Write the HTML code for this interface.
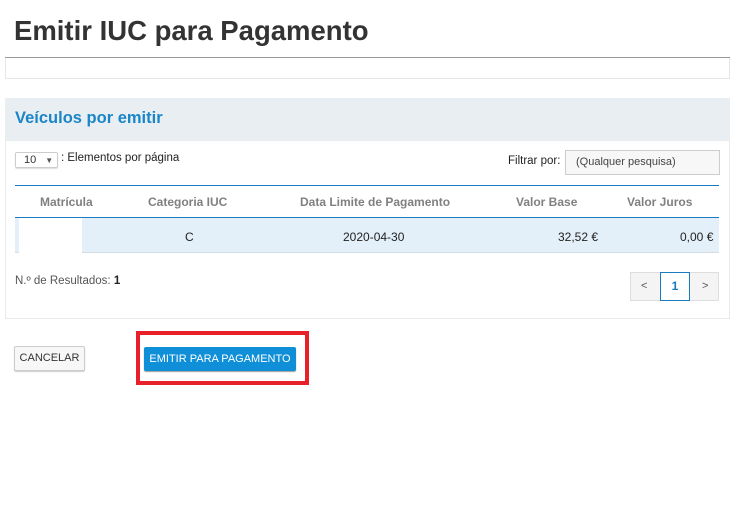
<!DOCTYPE html>
<html><head><meta charset="utf-8"><style>
*{box-sizing:border-box;margin:0;padding:0}
body{width:752px;height:525px;background:#fff;font-family:"Liberation Sans",sans-serif;position:relative;overflow:hidden;color:#333}
.a{position:absolute}
</style></head><body>
<div class="a" style="left:14px;top:15px;font-size:27.5px;font-weight:bold;color:#333">Emitir IUC para Pagamento</div>
<div class="a" style="left:5px;top:57px;width:725px;height:1px;background:#999"></div>
<div class="a" style="left:5px;top:58px;width:725px;height:21px;border:1px solid #e6e6e6;border-top:none"></div>
<div class="a" style="left:5px;top:98px;width:725px;height:221px;border:1px solid #e6eaed"></div>
<div class="a" style="left:5px;top:98px;width:725px;height:43px;background:#e8eef2"></div>
<div class="a" style="left:15px;top:109px;font-size:16.5px;font-weight:bold;color:#1a86c8">Veículos por emitir</div>
<div class="a" style="left:15px;top:152px;width:43px;height:16px;border:1px solid #ccc;border-radius:2px;box-shadow:0 1px 1px #ddd;font-size:11px;padding:1px 0 0 8px">10 <span style="font-size:8px;margin-left:6px;color:#555">▼</span></div>
<div class="a" style="left:61px;top:152px;font-size:11.5px;color:#222">: Elementos por página</div>
<div class="a" style="left:508px;top:155px;font-size:11.5px;color:#222">Filtrar por:</div>
<div class="a" style="left:565px;top:150px;width:155px;height:25px;border:1px solid #ccc;background:#f7f7f7;font-size:11px;color:#444;padding:5px 10px">(Qualquer pesquisa)</div>
<div class="a" style="left:15px;top:185px;width:704px;height:1px;background:#1a7cc0"></div>
<div class="a" style="left:15px;top:217px;width:704px;height:1px;background:#1a7cc0"></div>
<div class="a" style="top:195px;left:0;width:752px;font-size:12px;color:#808080;font-weight:bold">
<span class="a" style="left:40px">Matrícula</span><span class="a" style="left:148px">Categoria IUC</span><span class="a" style="left:300px">Data Limite de Pagamento</span><span class="a" style="left:516px">Valor Base</span><span class="a" style="left:627px">Valor Juros</span></div>
<div class="a" style="left:15px;top:218px;width:704px;height:35px;background:#e3f0f9;border-bottom:1px solid #d5dde3"></div>
<div class="a" style="left:19px;top:218px;width:63px;height:35px;background:#fff"></div>
<div class="a" style="top:230px;left:0;width:752px;font-size:12px;color:#222">
<span class="a" style="left:185px">C</span><span class="a" style="left:343px">2020-04-30</span><span class="a" style="left:558px">32,52 €</span><span class="a" style="left:680px">0,00 €</span></div>
<div class="a" style="left:15px;top:275px;font-size:11.5px;color:#555">N.º de Resultados: <b style="color:#222">1</b></div>
<div class="a" style="left:630px;top:272px;width:89px;height:29px;border:1px solid #ddd;background:#f4f4f4"></div>
<div class="a" style="left:641px;top:280px;font-size:11px;color:#555">&lt;</div>
<div class="a" style="left:660px;top:272px;width:30px;height:29px;border:1px solid #1a7cc0;background:#fff;color:#1a7cc0;font-weight:bold;font-size:12px;text-align:center;line-height:27px">1</div>
<div class="a" style="left:702px;top:280px;font-size:11px;color:#555">&gt;</div>
<div class="a" style="left:14px;top:346px;width:71px;height:25px;border:1px solid #ccc;border-radius:2px;background:#f7f7f7;box-shadow:0 1px 1px #ccc;font-size:11px;color:#333;text-align:center;line-height:23px">CANCELAR</div>
<div class="a" style="left:136px;top:331px;width:173px;height:54px;border:4px solid #e8202a"></div>
<div class="a" style="left:144px;top:347px;width:152px;height:24px;background:#0f8fd8;border-radius:2px;box-shadow:0 1px 1px #999;font-size:11px;color:#fff;text-align:center;line-height:24px">EMITIR PARA PAGAMENTO</div>
</body></html>
